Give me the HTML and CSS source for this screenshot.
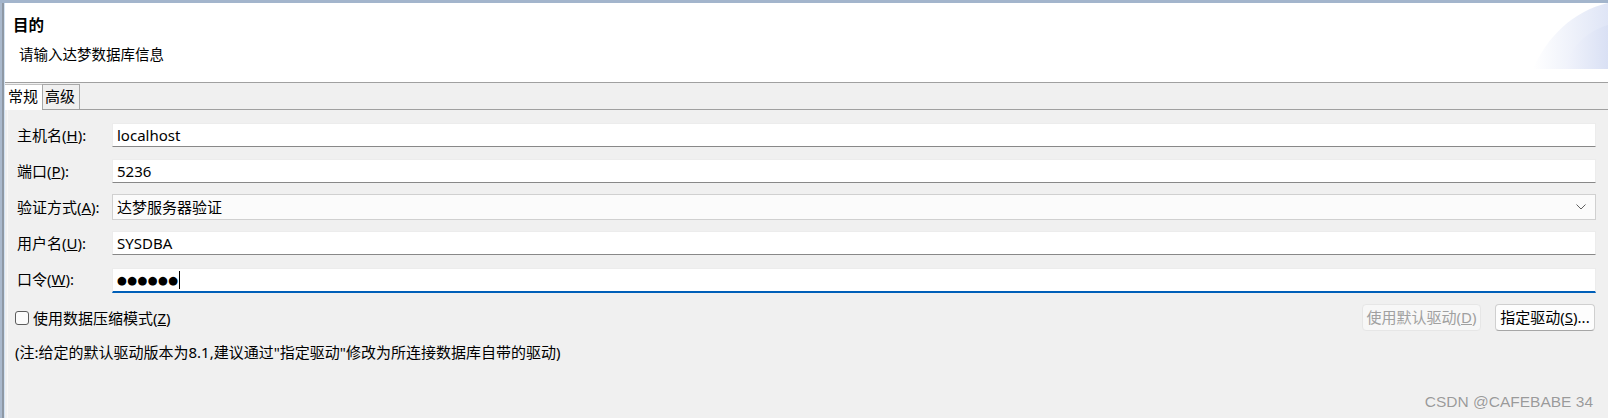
FILE: index.html
```html
<!DOCTYPE html>
<html lang="zh-CN">
<head>
<meta charset="utf-8">
<title>达梦数据库连接</title>
<link rel="stylesheet" href="styles.css">
</head>
<body>
<div class="window">
  <div class="topbar"></div>
  <div class="frame">
    <div class="edge"></div>
    <div class="main">
      <div class="header">
        <div class="title">目的</div>
        <div class="subtitle">请输入达梦数据库信息</div>
        <svg class="deco" width="75" height="66" viewBox="0 0 75 66">
          <defs>
            <linearGradient id="g1" x1="0" y1="0" x2="1" y2="0">
              <stop offset="0" stop-color="#ffffff"/>
              <stop offset="1" stop-color="#dfe5f6"/>
            </linearGradient>
            <linearGradient id="g2" x1="0" y1="0" x2="1" y2="0">
              <stop offset="0" stop-color="#f3f5fc"/>
              <stop offset="1" stop-color="#d9e0f4"/>
            </linearGradient>
          </defs>
          <path d="M0,66 C14,34 40,8 75,0 L75,66 Z" fill="url(#g1)"/>
          <path d="M30,66 C38,44 54,28 75,22 L75,66 Z" fill="url(#g2)"/>
        </svg>
      </div>
      <div class="tabbar">
        <div class="tab active">常规</div>
        <div class="tab">高级</div>
      </div>
      <div class="panel">
        <div class="form">
          <label class="lbl">主机名(<u>H</u>):</label>
          <div class="field">localhost</div>
          <label class="lbl">端口(<u>P</u>):</label>
          <div class="field">5236</div>
          <label class="lbl">验证方式(<u>A</u>):</label>
          <div class="field select">达梦服务器验证
            <svg class="chev" width="10" height="6" viewBox="0 0 10 6"><path d="M0.5,0.5 L5,5 L9.5,0.5" fill="none" stroke="#606060" stroke-width="1"/></svg>
          </div>
          <label class="lbl">用户名(<u>U</u>):</label>
          <div class="field">SYSDBA</div>
          <label class="lbl">口令(<u>W</u>):</label>
          <div class="field focus"><span class="dots">●●●●●●</span><span class="caret"></span></div>
        </div>
        <div class="actions">
          <div class="check"><span class="box"></span><span>使用数据压缩模式(<u>Z</u>)</span></div>
          <div class="buttons">
            <div class="btn disabled">使用默认驱动(<u>D</u>)</div>
            <div class="btn">指定驱动(<u>S</u>)...</div>
          </div>
        </div>
        <div class="note">(注:给定的默认驱动版本为8.1,建议通过"指定驱动"修改为所连接数据库自带的驱动)</div>
      </div>
    </div>
  </div>
  <div class="watermark">CSDN @CAFEBABE 34</div>
</div>
</body>
</html>
```
FILE: styles.css
```css
* { box-sizing: border-box; }
html, body { margin: 0; padding: 0; }
body {
  width: 1608px;
  height: 418px;
  overflow: hidden;
  background: #f0f0f0;
  font-family: "Noto Sans", "Noto Sans CJK SC", sans-serif;
  font-size: 15px;
  color: #000;
}
.window {
  position: relative;
  width: 1608px;
  height: 418px;
  display: flex;
  flex-direction: column;
}
.topbar {
  height: 3px;
  background: #a3b5cc;
}
.frame {
  flex: 1;
  display: flex;
}
.edge {
  width: 5px;
  background: linear-gradient(to right, #aab9cd 0, #aab9cd 2px, #8e98a4 2px, #8e98a4 4px, #d3e2f2 4px, #d3e2f2 5px);
}
.main {
  flex: 1;
  display: flex;
  flex-direction: column;
}
.header {
  position: relative;
  height: 80px;
  background: #fff;
  border-bottom: 1px solid #a0a0a0;
  padding: 12px 0 0 8px;
}
.title {
  font-weight: bold;
  line-height: 20px;
  font-size: 15.5px;
}
.subtitle {
  margin: 9px 0 0 6px;
  line-height: 20px;
  font-size: 14.5px;
}
.deco {
  position: absolute;
  top: 0;
  right: 0;
  display: block;
}
.tabbar {
  height: 27px;
  display: flex;
  align-items: flex-end;
  border-bottom: 1px solid #a0a0a0;
  background: #f0f0f0;
}
.tab {
  height: 25px;
  line-height: 23px;
  padding: 0 3px;
  font-size: 15px;
  border: 1px solid #a8a8a8;
  border-bottom: none;
  background: #f0f0f0;
}
.tab.active {
  width: 37px;
  background: #fff;
  margin-bottom: -1px;
  height: 26px;
  border-right: none;
  border-left: none;
  border-top: 1px solid #c0c0c0;
  padding-left: 3px;
}
.tab:not(.active) {
  width: 38px;
  border-left: 1px solid #a8a8a8;
  padding-left: 2px;
}
.panel {
  flex: 1;
  margin: 0 2px;
  border-left: 1px solid #f8f8f8;
  padding: 13px 10px 0 9px;
  background: #f0f0f0;
}
.form {
  display: grid;
  grid-template-columns: 95px 1fr;
  grid-auto-rows: 24px;
  row-gap: 12px;
  align-items: center;
}
.lbl {
  line-height: 20px;
  font-size: 15px;
}
.field {
  height: 24px;
  background: #fff;
  border: 1px solid #ececec;
  border-bottom: 1px solid #888;
  padding: 0 4px;
  line-height: 22px;
  font-size: 15px;
  display: flex;
  align-items: center;
}
.field.select {
  background: #fbfbfb;
  border: 1px solid #d0d0d0;
  height: 26px;
  position: relative;
  justify-content: space-between;
  padding-right: 9px;
}
.chev { display: block; }
.field.focus {
  border-bottom: 2px solid #005fb8;
  height: 25px;
  margin-top: 2px;
}
.dots {
  font-family: "DejaVu Sans", sans-serif;
  font-size: 11.4px;
  letter-spacing: 0.3px;
  line-height: 20px;
}
.caret {
  display: inline-block;
  width: 1px;
  height: 18px;
  background: #000;
  margin-left: 1px;
}
.actions {
  margin-top: 13px;
  height: 27px;
  display: flex;
  align-items: center;
  justify-content: space-between;
}
.check {
  display: flex;
  align-items: center;
  margin-left: -2px;
  line-height: 20px;
  font-size: 15px;
}
.box {
  width: 14px;
  height: 14px;
  border: 1px solid #5c5c5c;
  border-radius: 3px;
  background: #fbfbfb;
  margin-right: 4px;
}
.buttons {
  display: flex;
  gap: 14px;
  margin-right: 1px;
}
.btn {
  height: 27px;
  line-height: 24px;
  padding: 0 3px;
  border: 1px solid #cfcfcf;
  border-bottom-color: #a6a6a6;
  border-radius: 4px;
  background: #fdfdfd;
  font-size: 15px;
  white-space: nowrap;
}
.btn.disabled {
  width: 119px;
  color: #a0a0a0;
  border-color: #e6e6e6;
  background: #f7f7f7;
  text-align: center;
}
.btn:not(.disabled) { width: 100px; text-align: center; }
.note {
  margin: 11px 0 0 -2px;
  line-height: 20px;
  font-size: 15px;
}
.watermark {
  position: absolute;
  right: 15px;
  bottom: 6px;
  font-family: "Liberation Sans", sans-serif;
  font-size: 15.5px;
  line-height: 20px;
  color: #9a9a9a;
  text-shadow: 0 0 1px #fff;
}
```
